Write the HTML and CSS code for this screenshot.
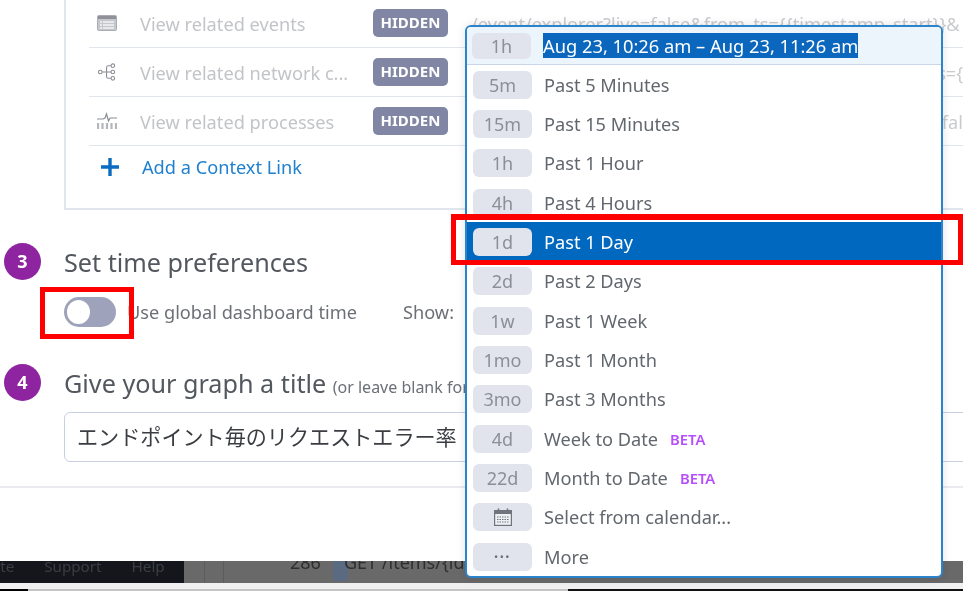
FILE: index.html
```html
<!DOCTYPE html>
<html lang="en">
<head>
  <meta charset="UTF-8" />
  <title>Graph editor</title>
  <link rel="stylesheet" href="styles.css">
</head>
<body>
  <div class="page">
    <div class="editor soft">
      <div class="links-card">
        <div class="link-row">
          <svg class="row-icon" viewBox="0 0 20 16"><rect x="0.5" y="0.5" width="19" height="15" rx="1" fill="#c4c7cc" stroke="#a9acb3"/><rect x="1" y="1" width="18" height="3" fill="#8f9299"/><path d="M3 7h2M3 10h2M3 13h2M6 7h11M6 10h11M6 13h11" stroke="#f4f4f4" stroke-width="1.3"/></svg>
          <span class="row-name">View related events</span>
          <span class="hidden-tag">HIDDEN</span>
          <span class="row-url">/event/explorer?live=false&amp;from_ts={{timestamp_start}}&amp;</span>
        </div>
        <div class="link-row">
          <svg class="row-icon" viewBox="0 0 20 20" fill="none" stroke="#8b8e95" stroke-width="1.2"><circle cx="2.5" cy="10" r="2"/><circle cx="16.5" cy="3" r="2"/><circle cx="16.5" cy="10" r="2"/><circle cx="16.5" cy="17" r="2"/><path d="M4.5 10h10M14.5 3h-3q-2 0-2 2v10q0 2 2 2h3"/></svg>
          <span class="row-name">View related network c...</span>
          <span class="hidden-tag">HIDDEN</span>
          <span class="row-url">/network?live=false&amp;from_ts={{timestamp_start}}&amp;to_ts={</span>
        </div>
        <div class="link-row">
          <svg class="row-icon" viewBox="0 0 20 18" fill="none" stroke="#8b8e95" stroke-width="1.2"><path d="M0 7h6l2-1 1.5-4 2 7 1.5-3h7"/><path d="M1 11v6M5.5 11v6M10 11v6M14.5 11v6M19 11v6" stroke="#b4b6bb" stroke-width="2.2"/></svg>
          <span class="row-name">View related processes</span>
          <span class="hidden-tag">HIDDEN</span>
          <span class="row-url">/process?tag={{id}}&amp;from_ts={{timestamp_start}}&amp;live=fal</span>
        </div>
        <div class="add-row">
          <svg class="plus-icon" viewBox="0 0 20 20"><path d="M10 1v18M1 10h18" stroke="#0a6bc0" stroke-width="3.4"/></svg>
          <span>Add a Context Link</span>
        </div>
      </div>

      <div class="step step-three">
        <span class="step-num">3</span>
        <h2>Set time preferences</h2>
      </div>
      <div class="time-row">
        <span class="toggle"><span class="knob"></span></span>
        <span class="time-label">Use global dashboard time</span>
        <span class="show-label">Show:</span>
      </div>

      <div class="step step-four">
        <span class="step-num">4</span>
        <h2>Give your graph a title <small>(or leave blank for</small></h2>
      </div>
      <div class="title-input">エンドポイント毎のリクエストエラー率</div>
      <div class="rule"></div>
    </div>

    <div class="backdrop soft">
      <div class="nav-dark"><span>Invite</span><span>Support</span><span>Help</span></div>
      <div class="back-table">
        <span class="back-col"></span>
        <span class="back-col"></span>
        <span class="back-count">286</span>
        <span class="back-path">GET /items/{id}</span>
      </div>
    </div>
    <div class="bottom-strip"><div class="strip-line"></div></div>

    <div class="time-menu soft">
      <div class="menu-head">
        <span class="chip">1h</span>
        <span class="selected-text">Aug 23, 10:26 am – Aug 23, 11:26 am</span>
      </div>
      <div class="menu-item"><span class="chip">5m</span><span>Past 5 Minutes</span></div>
      <div class="menu-item"><span class="chip">15m</span><span>Past 15 Minutes</span></div>
      <div class="menu-item"><span class="chip">1h</span><span>Past 1 Hour</span></div>
      <div class="menu-item"><span class="chip">4h</span><span>Past 4 Hours</span></div>
      <div class="menu-item active"><span class="chip">1d</span><span>Past 1 Day</span></div>
      <div class="menu-item"><span class="chip">2d</span><span>Past 2 Days</span></div>
      <div class="menu-item"><span class="chip">1w</span><span>Past 1 Week</span></div>
      <div class="menu-item"><span class="chip">1mo</span><span>Past 1 Month</span></div>
      <div class="menu-item"><span class="chip">3mo</span><span>Past 3 Months</span></div>
      <div class="menu-item"><span class="chip">4d</span><span>Week to Date</span><span class="beta">BETA</span></div>
      <div class="menu-item"><span class="chip">22d</span><span>Month to Date</span><span class="beta">BETA</span></div>
      <div class="menu-item">
        <span class="chip"><svg class="cal-icon" viewBox="0 0 18 18"><rect x="0.6" y="2.6" width="16.8" height="14.8" fill="#eef0f4" stroke="#70747c" stroke-width="1.2"/><rect x="1" y="3" width="16" height="3" fill="#70747c"/><path d="M4.5 0.5v4M13.5 0.5v4" stroke="#70747c" stroke-width="1.6"/><path d="M3 9h12M3 11.5h12M3 14h12" stroke="#70747c" stroke-width="1.2" stroke-dasharray="1.5 1"/></svg></span>
        <span>Select from calendar...</span>
      </div>
      <div class="menu-item"><span class="chip dots">•••</span><span>More</span></div>
    </div>

    <div class="red-box box-day"></div>
    <div class="red-box box-toggle"></div>
  </div>
</body>
</html>
```

FILE: styles.css
```css
* {
  box-sizing: border-box;
}

html, body {
  margin: 0;
  padding: 0;
  background: #fff;
}

body {
  font-family: "Noto Sans", "Open Sans", sans-serif;
  color: #4a4f57;
}

.page {
  position: relative;
  width: 963px;
  height: 591px;
  overflow: hidden;
  display: flex;
  flex-direction: column;
}

/* the reference is an upscaled capture, everything but the red boxes is soft */
.soft {
  filter: blur(0.4px);
}

.editor {
  height: 561px;
  flex: none;
  overflow: hidden;
}

/* context links */
.links-card {
  width: 1000px;
  height: 210px;
  margin-left: 64px;
  padding: 0 0 0 23px;
  border: solid #e1e5ee;
  border-width: 0 0 2px 2px;
}

.link-row {
  display: flex;
  align-items: center;
  height: 49px;
  padding-top: 1px;
  border-bottom: 1px solid #e1e5ee;
  white-space: nowrap;
}

.link-row:first-child {
  height: 48px;
}

.row-icon {
  width: 20px;
  height: 18px;
  flex: none;
  margin: 0 0 2px 8px;
}

.row-name {
  width: 256px;
  padding-left: 23px;
  font-size: 18.2px;
  color: #c2c4c8;
  flex: none;
}

.hidden-tag {
  flex: none;
  width: 75px;
  height: 28px;
  line-height: 27px;
  border-radius: 5px;
  margin-bottom: 2px;
  background: #8086a3;
  color: #fff;
  font-size: 15px;
  font-weight: 700;
  text-align: center;
}

.row-url {
  margin-left: 23px;
  font-size: 18.2px;
  color: #c9cbcf;
}

.add-row {
  display: flex;
  align-items: center;
  height: 42px;
  font-size: 18.2px;
  color: #1f80cf;
}

.plus-icon {
  width: 20px;
  height: 20px;
  flex: none;
  margin-left: 11px;
  margin-right: 22px;
}

/* numbered steps */
.step {
  display: flex;
  align-items: center;
  height: 37px;
  margin-left: 4px;
}

.step-three {
  margin-top: 33px;
}

.step-four {
  margin-top: 37px;
}

.step-num {
  width: 37px;
  height: 37px;
  border-radius: 50%;
  background: #8e24a0;
  color: #fff;
  flex: none;
  font-size: 18px;
  font-weight: 700;
  line-height: 37px;
  text-align: center;
}

.step h2 {
  margin: 0 0 0 23px;
  font-size: 25.2px;
  font-weight: 400;
  color: #53585f;
  white-space: nowrap;
}

.step small {
  font-size: 16px;
  color: #6b7077;
}

.time-row {
  display: flex;
  align-items: center;
  height: 30px;
  margin: 17px 0 0 64px;
  font-size: 18.2px;
  color: #6c7076;
}

.toggle {
  width: 52px;
  height: 30px;
  flex: none;
  padding: 3px;
  border-radius: 15px;
  background: #9ea3bb;
}

.knob {
  display: block;
  width: 23px;
  height: 24px;
  border-radius: 50%;
  background: #fff;
}

.time-label {
  margin-left: 11px;
}

.show-label {
  margin-left: 46px;
}

.title-input {
  width: 1000px;
  height: 50px;
  margin: 11px 0 0 64px;
  padding-left: 12px;
  border: 1px solid #c9cfe2;
  border-radius: 6px;
  font-family: "Noto Sans CJK JP", sans-serif;
  font-size: 21.1px;
  line-height: 46px;
  color: #3a3d42;
  white-space: nowrap;
}

.rule {
  height: 2px;
  margin-top: 24px;
  background: #e9ebf1;
}

/* app behind the dialog */
.backdrop {
  display: flex;
  height: 22px;
  flex: none;
  background: #696969;
  overflow: hidden;
}

.nav-dark {
  width: 184px;
  flex: none;
  display: flex;
  gap: 30px;
  background: #14161c;
  color: #3b3d44;
  font-size: 15.2px;
  line-height: 10px;
}

.nav-dark span:first-child {
  margin-left: -26px;
}

.back-table {
  flex: 1;
  display: flex;
  color: #2e2e2e;
  font-size: 18px;
  line-height: 3px;
}

.back-col {
  width: 21px;
  border-right: 1px solid #5c5c5c;
}

.back-col + .back-col {
  width: 19px;
}

.back-count {
  margin-left: 66px;
  width: 43px;
}

.back-path {
  padding-left: 11px;
  height: 20px;
  background: linear-gradient(to right, #5a6a80 15px, transparent 15px);
}

.bottom-strip {
  flex: 1;
  padding-top: 6px;
  background: #f0f0f0;
}

.strip-line {
  height: 2px;
  background: linear-gradient(to right, #000 28px, #c4c4c4 28px, #c4c4c4 568px, #111 568px);
}

/* time picker popup */
.time-menu {
  position: absolute;
  left: 465px;
  top: 25px;
  width: 478px;
  height: 553px;
  background: #fff;
  border: 2px solid #2b83cb;
  border-radius: 6px;
  box-shadow: 0 0 10px rgba(0, 0, 0, 0.12);
  overflow: hidden;
}

.menu-head {
  display: flex;
  align-items: center;
  height: 38px;
  padding-left: 5px;
  background: #ebf5fb;
  border-bottom: 1px solid #c9d6e8;
}

.menu-head .chip {
  width: 59px;
  height: 26px;
  margin-right: 12px;
}

.selected-text {
  background: #0b66bd;
  color: #fff;
  font-size: 18.3px;
  line-height: 25px;
  white-space: nowrap;
}

.menu-item {
  display: flex;
  align-items: center;
  height: 39.35px;
  padding-left: 6px;
  font-size: 18.2px;
  color: #62676e;
}

.menu-item.active {
  background: #0069bf;
  color: #fff;
}

.chip {
  width: 59px;
  height: 28px;
  flex: none;
  display: flex;
  align-items: center;
  justify-content: center;
  margin-right: 12px;
  border-radius: 6px;
  background: #e1e4ed;
  color: #8b8f96;
  font-size: 18px;
}

.cal-icon {
  width: 18px;
  height: 18px;
}

.chip.dots {
  font-size: 11px;
  letter-spacing: 1.5px;
  color: #6b6f77;
}

.beta {
  margin-left: 12px;
  font-size: 14.8px;
  font-weight: 600;
  color: #b54dff;
}

/* annotation boxes on top of the screenshot */
.red-box {
  position: absolute;
  border: 5px solid #f00;
}

.box-day {
  left: 451px;
  top: 214px;
  width: 512px;
  height: 51px;
  border-top-width: 6px;
}

.box-toggle {
  left: 40px;
  top: 287px;
  width: 94px;
  height: 52px;
}
```
